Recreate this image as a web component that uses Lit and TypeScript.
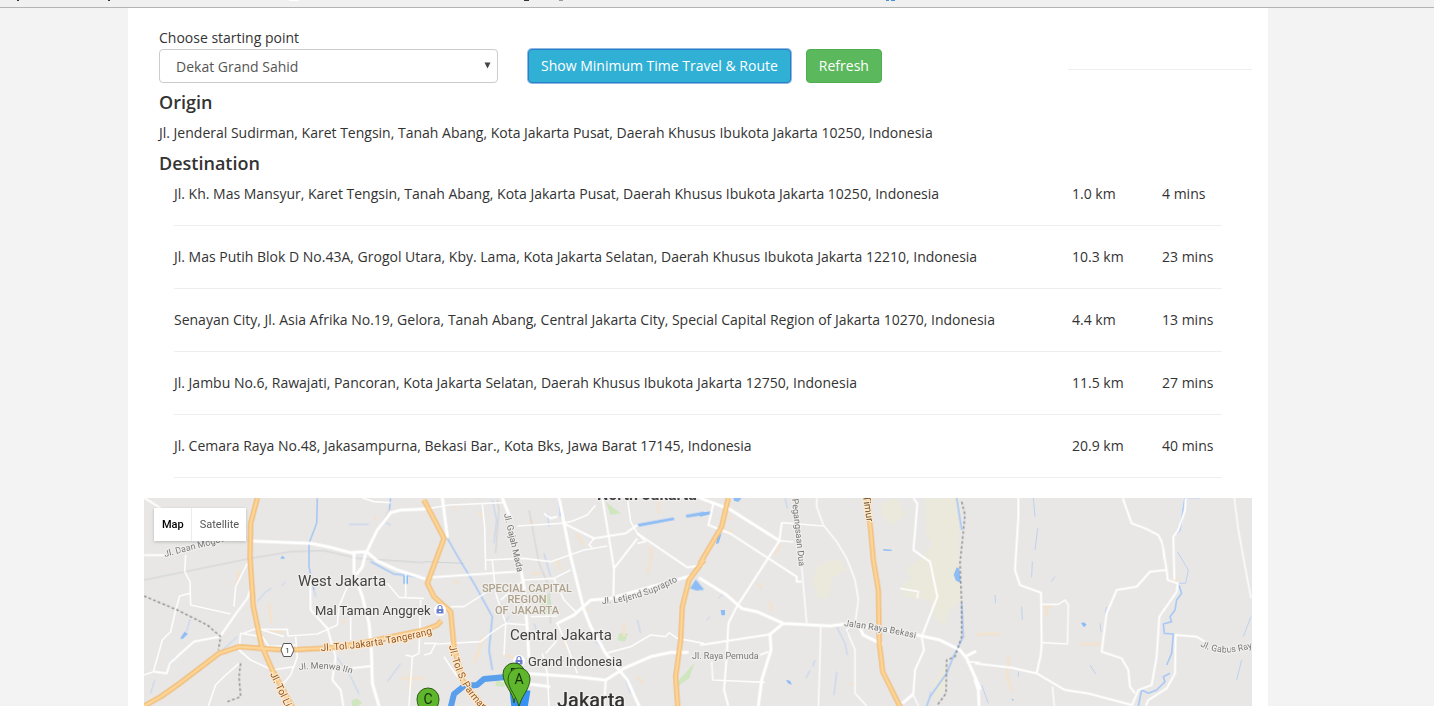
import { LitElement, html, svg, css } from "lit";
import { customElement, state } from "lit/decorators.js";

interface Stop {
  address: string;
  distance: string;
  duration: string;
}

const STOPS: Stop[] = [
  { address: "Jl. Kh. Mas Mansyur, Karet Tengsin, Tanah Abang, Kota Jakarta Pusat, Daerah Khusus Ibukota Jakarta 10250, Indonesia", distance: "1.0 km", duration: "4 mins" },
  { address: "Jl. Mas Putih Blok D No.43A, Grogol Utara, Kby. Lama, Kota Jakarta Selatan, Daerah Khusus Ibukota Jakarta 12210, Indonesia", distance: "10.3 km", duration: "23 mins" },
  { address: "Senayan City, Jl. Asia Afrika No.19, Gelora, Tanah Abang, Central Jakarta City, Special Capital Region of Jakarta 10270, Indonesia", distance: "4.4 km", duration: "13 mins" },
  { address: "Jl. Jambu No.6, Rawajati, Pancoran, Kota Jakarta Selatan, Daerah Khusus Ibukota Jakarta 12750, Indonesia", distance: "11.5 km", duration: "27 mins" },
  { address: "Jl. Cemara Raya No.48, Jakasampurna, Bekasi Bar., Kota Bks, Jawa Barat 17145, Indonesia", distance: "20.9 km", duration: "40 mins" },
];

/* Map geometry, in tiles; tile units are a third of a map unit. */
interface Tile {
  x: number;
  park: string;
  sand: string;
  block: string;
  lake: string;
  stream: string;
  river: string;
  rail: string;
  lane: string;
  street: string;
  avenue: string;
  toll: string;
  border: string;
}

const TILES: Tile[] = [
  {
    x: 0,
    park: "M622 632L640 625L655 640L640 648H625Z",
    sand: "",
    block: "M375 340L382 400M285 240L275 290M365 425H420M600 385V400M770 565H840M800 540V600M640 350L655 380M690 80L700 90M835 24V40",
    lake: "M778 257H792V282H778ZM408 206L416 197L424 206ZM108 445L122 425L132 432L116 447Z",
    stream: "M340 335L365 305L382 295M412 288L425 275M128 425L138 388M615 103H675M570 490L620 560L645 612M770 520L730 575M235 480L280 440M20 610L32 570M725 98L740 105M510 300L515 320M75 530L95 500",
    river: "M520 24L518 100L495 160L495 230L510 300M740 24L736 60M680 215L750 252L840 262",
    rail: "M0 270L320 205L440 185L540 182L640 205L840 218M735 60L665 190",
    lane: "M125 195L122 245L138 275L140 345L260 372M138 310L107 318L95 360L80 425L55 450L28 545L0 555M310 220L275 290L270 350M355 440L290 430L285 480L320 510L385 540L450 530L460 500L455 440M300 430L330 418H430L432 438L520 432L580 405L585 350L610 290M285 520L240 560L215 585L193 648M460 500L440 555L410 590M730 280L765 322L840 325M785 325V250M785 495L805 500L795 648M620 380V450M655 24L690 35L740 38M355 420L420 440M355 440L375 470L455 465M805 500L825 490L830 330",
    street: "M0 24L20 35L50 55M0 195H70M28 545L68 550L78 520L110 490L150 455L228 440L275 372L310 325L322 290M498 255L500 360L550 415L575 500L565 570L590 600L598 648M620 535L680 528",
    avenue: "M330 153L420 157L500 160L560 172L620 188L668 185L700 213L760 240L840 265M668 185L700 120L740 68L770 60L840 57M630 190V250L655 320L675 400L682 480L685 580L705 648M665 190L655 230L640 250",
    toll: "M340 24L320 100L318 200L328 350L352 465L385 540L450 660M0 648L50 620L100 585L225 490L285 470L350 475L430 480L550 474L640 462L740 440L840 420",
    border: "M0 318L100 360L190 405L230 440L223 480M290 520L285 560L290 620L250 635",
  },
  {
    x: 840,
    park: "M350 312H375L390 375H345ZM545 35L590 70L560 75ZM585 430H612L602 455L580 450ZM765 570L812 518L796 565L762 588ZM215 570L245 580L240 590L215 588Z",
    sand: "",
    block: "M85 50L98 55M165 65L175 80M320 90L330 105M455 130L480 165M672 170L685 185L672 250M90 270L105 280M160 490L150 520M470 335L490 360M600 400V440M705 24V70M400 210L410 240M205 130H215M430 440L420 470M175 440L160 500M640 560L660 580M325 250H350M240 495L300 510",
    lake: "M798 295L815 268L840 298L818 302ZM640 102L748 82L752 90L645 110ZM785 75L840 65V75L788 83Z",
    stream: "M205 30L218 90L210 160M370 70L375 110M360 190L380 260M480 420L530 470M600 555L620 610M640 390L650 430M240 400L255 380M330 400L345 440",
    river: "M70 145L110 215L150 280L205 380L195 480L205 540M405 24L410 80",
    rail: "M315 60L330 140L345 220L375 290L380 400M0 215L120 220M220 30L225 60L215 190",
    lane: "M0 58L75 45L240 38M175 42L182 110L185 240M280 108L410 100L440 95L490 75L515 45M185 210L300 205L380 215L480 180L550 168M205 210L215 310L245 400L240 495M300 270L390 265L440 240M80 350L120 350L190 305M40 462L170 455L200 430L245 400M400 400L430 470L460 550M355 490L370 550L375 648M0 460H40M35 460L20 490L0 495M365 490L400 450M390 265L420 330L460 370M510 145L495 165L505 172M610 24L620 95L640 130L665 155L640 160M545 490L620 470L680 435L725 440L735 428L760 445L840 460M245 400L310 405M300 270L230 330M320 380L400 378M100 560L60 500",
    street: "M20 262L280 245M415 98L510 145L605 130L640 105M640 145L570 235M640 130L790 232L840 225M545 570L540 648M535 24L570 235L568 320M360 70L380 85L400 80",
    avenue: "M55 24L70 140M235 24L255 75M290 235L300 290L310 420L315 510M405 24L440 200L480 360L500 410L545 490L610 570L645 648M800 258L700 285L560 325L500 330L450 375L400 400M300 550L450 560L545 570L600 535L680 500L740 487H790M300 580L375 590",
    toll: "M0 30L60 145L10 280L30 320L80 365L90 470L115 570L180 655M0 420L40 405L52 392M840 210L795 270L775 350L770 450L755 560L762 660",
    border: "",
  },
  {
    x: 1668,
    park: "",
    sand: "M675 24H780L775 200L780 330L745 365L735 410L705 385L690 330L610 320L605 285L635 265L615 240L650 215L700 160L680 140ZM545 40L590 24L615 75L580 105L560 90L545 70ZM345 240L365 220L415 205L440 240L395 265L385 325H355L340 285ZM700 580L740 520L735 600L705 635Z",
    block: "M85 75L95 90M80 125H100M240 165L225 195M170 280L185 295M208 335L218 365M450 580H460M835 430V440M510 415V430",
    lake: "M770 232L778 236L782 278L768 272L761 255ZM62 360L75 360L75 376H64ZM258 570L270 572L276 584L264 580ZM65 130L56 160L48 162L52 140ZM0 68L32 64V73L0 80ZM100 24H125L115 36L102 32ZM548 177L575 179V183L552 182Z",
    stream: "M255 24L262 55M410 410L425 440L435 460L442 495M440 430L455 400M345 510L338 530M330 540L318 565M410 545L402 615M70 310L55 325M0 300H10M690 605V620M20 390L30 380",
    river: "M785 340L790 440L760 500L740 550L690 620L680 648M770 24L785 120",
    rail: "",
    lane: "M245 98L370 108M238 152L280 156M305 230L320 400M600 295L655 305L652 325M35 515L38 570L195 577M362 410L360 500L355 648M350 24V50L370 105L410 155L440 205L465 270L475 330L465 400L440 420L465 480L465 610L500 648M610 640L640 615L655 648M800 515L840 518",
    street: "M40 40L25 105L90 130L290 260V275H305M245 98L238 152L110 350L85 400L80 500L72 600L85 648M0 465L210 433M640 24L652 40L645 125L640 180L690 215L712 320L665 440L672 480L645 540L640 610L605 640M180 495L205 485",
    avenue: "M0 24L90 58L238 152M0 265L80 315L125 355L170 365L250 400L390 408L440 402L650 435L720 450L780 480L800 505L840 595M795 500L825 485M250 400L210 433L213 480L185 570L175 648M480 415L490 435L545 462",
    toll: "M85 24L65 110L0 220M500 10L512 120L520 210L535 300L538 460L548 545L605 660",
    border: "M785 35L795 75L780 220L785 340L785 440L765 500L740 510L738 610L710 648",
  },
  {
    x: 2493,
    park: "",
    sand: "",
    block: "M205 350H230M215 350V380M315 462H380M10 432H75M102 500L95 560L112 605M600 265L610 270M600 265V280",
    lake: "M318 400L327 397L335 404L327 412ZM110 626L116 628L114 634Z",
    stream: "M175 24L180 80M188 115L180 180M172 215L170 262M375 400L378 425M345 525L362 552M60 315L62 340M140 350L142 390M607 185L640 240L632 280H612M130 545V560M20 585L40 640M640 24H675M828 380L805 440M800 510L785 570M240 260L228 275M395 350L390 370",
    river: "M630 24L615 120L605 130M612 285L620 310L605 330L600 360L585 380L590 395L565 402L568 430L595 432L590 490L575 525M585 550L565 560L570 575L545 600L520 610L500 600L490 648",
    rail: "",
    lane: "M200 343H250L270 330L280 345L277 462L203 458M232 590L238 648M778 24L790 120L810 230L828 325",
    street: "M130 24V80L120 240L135 285L198 308L200 460L198 490L185 550M0 520L110 533L185 550L270 600L340 610L470 645M443 24L470 100L510 115L550 135L562 160L575 240L578 270L608 280L605 305L553 380L545 500L530 585L490 600L470 648M632 24L630 60L610 120L595 140L598 270M575 240L525 245L485 290L425 300L395 370L380 485L440 505L460 540L465 590L480 610M690 455L665 440L602 435L600 550L575 595L520 630L512 648",
    avenue: "M0 570L10 600L12 648",
    toll: "",
    border: "",
  },
];

const layer = (name: keyof Omit<Tile, "x">, cls: string = name) =>
  svg`<g class=${cls}>${TILES.map((t) => svg`<path transform=${`translate(${t.x} 0)`} d=${t[name] || "M0 0"}></path>`)}</g>`;

const pin = (x: number, y: number, letter: string) => svg`
  <g transform=${`translate(${x} ${y})`}>
    <path class="pin" d="M0 29C-1 18-11 10.500-11 0A11 11 0 0 1 11 0C11 10.500 1 18 0 29Z"></path>
    <text class="pin-letter" x="0" y="5">${letter}</text>
  </g>`;

const mall = (x: number, y: number) => svg`
  <g transform=${`translate(${x} ${y})`}>
    <circle r="6" fill="#fff"></circle>
    <path d="M-3.500-1H3.500V3.500H-3.500Z" fill="#6a7fd0"></path>
    <path d="M-2-1V-2.500A2 2 0 0 1 2-2.500V-1" fill="none" stroke="#6a7fd0" stroke-width="1.200"></path>
    <path d="M-1 1.500H1" stroke="#fff" stroke-width="1"></path>
  </g>`;

@customElement("route-map")
export class RouteMap extends LitElement {
  @state() private view = "Map";

  static styles = css`
    :host { display: block; position: relative; overflow: hidden; background: #e8e7e6; font-family: Roboto, sans-serif; }
    .canvas { position: absolute; inset: 0; width: 100%; height: 100%; display: block; }
    .types { position: absolute; top: 10px; left: 10px; display: flex; background: #fff; box-shadow: 0 1px 3px rgba(0, 0, 0, 0.2); }
    .type { border: 0; margin: 0; padding: 0 7px 0 8px; height: 33px; background: none; font: 11px/33px Roboto, sans-serif; color: #565656; cursor: pointer; }
    .type + .type { border-left: 1px solid #ececec; }
    .type.active { color: #000; font-weight: 500; }
    .park { fill: #cfe6bf; }
    .sand { fill: #ebe8dc; }
    .lake { fill: #8ebcf5; }
    .block, .stream, .river, .rail, .lane, .street, .avenue, .toll-edge, .toll, .border { fill: none; stroke-linejoin: round; }
    .block { stroke: #f5e2cb; stroke-width: 9; opacity: 0.8; }
    .stream { stroke: #bcd1f0; stroke-width: 3; }
    .river { stroke: #a9c9f4; stroke-width: 5; }
    .rail { stroke: #cfd1d3; stroke-width: 3; }
    .lane { stroke: #fff; stroke-width: 5; opacity: 0.85; }
    .street { stroke: #fff; stroke-width: 6; }
    .avenue { stroke: #fff; stroke-width: 9; stroke-linecap: round; }
    .toll-edge { stroke: #efb366; stroke-width: 15; }
    .toll { stroke: #fdd596; stroke-width: 9; }
    .border { stroke: #777; stroke-width: 3.500; stroke-dasharray: 8 7; }
    .route { fill: none; stroke: #5a9fec; stroke-width: 6; stroke-linejoin: round; }
    .route-main { fill: none; stroke: #3792f5; stroke-width: 9; }
    text { paint-order: stroke; stroke: #f0efed; stroke-width: 2.500px; stroke-linejoin: round; }
    .city { font-size: 15px; fill: #444; }
    .place { font-size: 13px; fill: #444; }
    .capital { font-size: 20px; font-weight: 500; fill: #333; }
    .north { font-size: 16px; font-weight: 700; fill: #444; }
    .region { font-size: 11px; font-weight: 500; fill: #aea28c; text-anchor: middle; }
    .road { font-size: 9px; fill: #777; }
    .tollname { font-size: 10px; fill: #95541f; stroke: #fde9cc; }
    .tollname.dark { fill: #6b4a26; }
    .pin { fill: #5fb52b; stroke: #2c5b14; stroke-width: 1; }
    .pin-letter { font-size: 14px; fill: #13300a; text-anchor: middle; stroke: none; }
    .shield { font-size: 8px; fill: #333; text-anchor: middle; stroke: none; }
  `;

  render() {
    return html`
      <svg class="canvas" viewBox="144 498 1108 208" preserveAspectRatio="xMidYMin slice" role="img" aria-label="Map of Jakarta">
        <defs>
          <path id="daan" d="M165 557Q195 549 226 541"></path>
          <path id="tol" d="M321 651Q380 648 436 633"></path>
          <path id="menwa" d="M299 670Q330 666 352 674"></path>
          <path id="suprapto" d="M602 604Q640 602 680 580"></path>
          <path id="parman" d="M449 646Q458 690 485 712"></path>
          <path id="bekasi" d="M844 626Q880 630 918 639"></path>
          <path id="gabus" d="M1200 646Q1225 660 1262 644"></path>
        </defs>
        <g transform="translate(144 490) scale(0.33333)">
          ${layer("sand")} ${layer("park")} ${layer("block")} ${layer("rail")} ${layer("stream")} ${layer("river")} ${layer("lake")}
          ${layer("lane")} ${layer("street")} ${layer("avenue")} ${layer("toll", "toll-edge")} ${layer("toll")} ${layer("border")}
        </g>
        <path class="route" d="M450 710L454 694L464 686L477 685L484 679L506 677"></path>
        <path class="route-main" d="M514 690L516 708M526 690L523 708"></path>

        <path d="M283.500 643.500H291L294 650L291 656.500H283.500L281 650Z" fill="#fff" stroke="#555"></path>
        <text class="shield" x="287.500" y="653">1</text>

        <text class="north" x="597" y="500">North Jakarta</text>
        <text class="city" x="298" y="586">West Jakarta</text>
        <text class="place" x="315" y="615">Mal Taman Anggrek</text>
        <text class="city" x="510" y="640">Central Jakarta</text>
        <text class="place" x="528" y="666">Grand Indonesia</text>
        <text class="capital" x="557" y="707">Jakarta</text>
        <text class="region" x="527" y="592">SPECIAL CAPITAL</text>
        <text class="region" x="527" y="603">REGION</text>
        <text class="region" x="527" y="614">OF JAKARTA</text>
        <text class="road"><textPath href="#daan">Jl. Daan Mogot</textPath></text>
        <text class="road"><textPath href="#menwa">Jl. Menwa IIn</textPath></text>
        <text class="road"><textPath href="#suprapto">Jl. Letjend Suprapto</textPath></text>
        <text class="road"><textPath href="#bekasi">Jalan Raya Bekasi</textPath></text>
        <text class="road"><textPath href="#gabus">Jl. Gabus Raya</textPath></text>
        <text class="road" x="692" y="659">Jl. Raya Pemuda</text>
        <text class="road" transform="translate(504 514) rotate(77)">Jl. Gajah Mada</text>
        <text class="road" transform="translate(792 499) rotate(84)">Pegangsaan Dua</text>
        <text class="tollname"><textPath href="#tol">Jl. Tol Jakarta-Tangerang</textPath></text>
        <text class="tollname"><textPath href="#parman">Jl. Tol S. Parman</textPath></text>
        <text class="tollname" transform="translate(270 674) rotate(65)">Jl. Tol Lingkar</text>
        <text class="tollname dark" transform="translate(863 496) rotate(82)">Timur</text>

        ${mall(440, 610)} ${mall(519, 661)}
        ${pin(428, 699, "C")} ${pin(514, 674, "B")} ${pin(519, 679, "A")}
      </svg>
      <div class="types">
        ${["Map", "Satellite"].map(
          (name) => html`<button type="button" class="type ${this.view === name ? "active" : ""}" @click=${() => (this.view = name)}>${name}</button>`
        )}
      </div>
    `;
  }
}

@customElement("app-root")
export class AppRoot extends LitElement {
  static styles = css`
    :host { display: flex; flex-direction: column; min-height: 100vh; background: #f3f3f3; color: #333; font: 14px/22px "Open Sans", sans-serif; }
    * { box-sizing: border-box; }
    .chrome { flex: none; height: 8px; background: #f0f0f0; border-bottom: 1px solid #b4b4b4; }
    .chrome-marks { display: block; width: 1000px; height: 7px; }
    .page { flex: 1; display: flex; flex-direction: column; margin: 0 166px 0 128px; padding: 19px 16px 0; background: #fff; }
    .details { padding-left: 15px; }
    .controls { display: flex; align-items: flex-end; }
    .field { flex: 0 1 339px; margin-right: 30px; }
    .label { display: block; }
    .select-wrap { position: relative; display: block; }
    .select { display: block; appearance: none; width: 100%; height: 34px; padding: 1px 24px 0 16px; border: 1px solid #ccc; border-radius: 4px; background: #fff; color: #555; font: inherit; }
    .arrow { position: absolute; right: 7px; top: 13px; width: 7px; height: 7px; fill: #444; pointer-events: none; }
    .btn { height: 34px; padding: 0 12px; border: 1px solid; border-radius: 4px; color: #fff; font: inherit; white-space: nowrap; cursor: pointer; }
    .info { background: #31b0d5; border-color: #2a7fc4; box-shadow: 0 0 0 1px #8fb8ea; margin-right: 15px; }
    .success { background: #5cb85c; border-color: #4cae4c; }
    .rule { width: 184px; margin: 0 0 13px auto; border: 0; border-top: 1px solid #eee; }
    .heading { margin: 9px 0 10px; font-size: 18px; line-height: 20px; font-weight: 600; }
    .text { margin: 0; }
    .stops { width: calc(100% - 45px); margin: 0 30px 20px 15px; border-collapse: separate; border-spacing: 0; table-layout: fixed; }
    .stops td { padding: 20px 0; border-bottom: 1px solid #eee; }
    .stops tr:first-child td { padding-top: 0; }
    .distance { width: 90px; }
    .duration { width: 60px; }
    route-map { flex: 1; min-height: 208px; }
  `;

  render() {
    return html`
      <div class="chrome">
        <svg class="chrome-marks" viewBox="0 0 1000 7" aria-hidden="true">
          <path d="M17 0h2v1h-2zM108 0h2v1h-2zM524 0h5v1h-5z" fill="#333"></path>
          <path d="M289 0h10v1h-10z" fill="#fff"></path>
          <path d="M559 0h4v1h-4z" fill="#999"></path>
          <path d="M886 0h3v1h-3zM891 0h4v1h-4z" fill="#4a90d9"></path>
        </svg>
      </div>
      <main class="page">
        <section class="details">
          <div class="controls">
            <div class="field">
              <label class="label" for="start">Choose starting point</label>
              <span class="select-wrap">
                <select class="select" id="start"><option>Dekat Grand Sahid</option></select>
                <svg class="arrow" viewBox="0 0 7 7" aria-hidden="true"><path d="M0.500 0.500H6.500L3.500 6.500Z"></path></svg>
              </span>
            </div>
            <button type="button" class="btn info">Show Minimum Time Travel &amp; Route</button>
            <button type="button" class="btn success">Refresh</button>
            <hr class="rule" />
          </div>
          <h4 class="heading">Origin</h4>
          <p class="text">Jl. Jenderal Sudirman, Karet Tengsin, Tanah Abang, Kota Jakarta Pusat, Daerah Khusus Ibukota Jakarta 10250, Indonesia</p>
          <h4 class="heading">Destination</h4>
          <table class="stops">
            <colgroup><col /><col class="distance" /><col class="duration" /></colgroup>
            <tbody>
              ${STOPS.map((s) => html`<tr><td>${s.address}</td><td>${s.distance}</td><td>${s.duration}</td></tr>`)}
            </tbody>
          </table>
        </section>
        <route-map></route-map>
      </main>
    `;
  }
}
